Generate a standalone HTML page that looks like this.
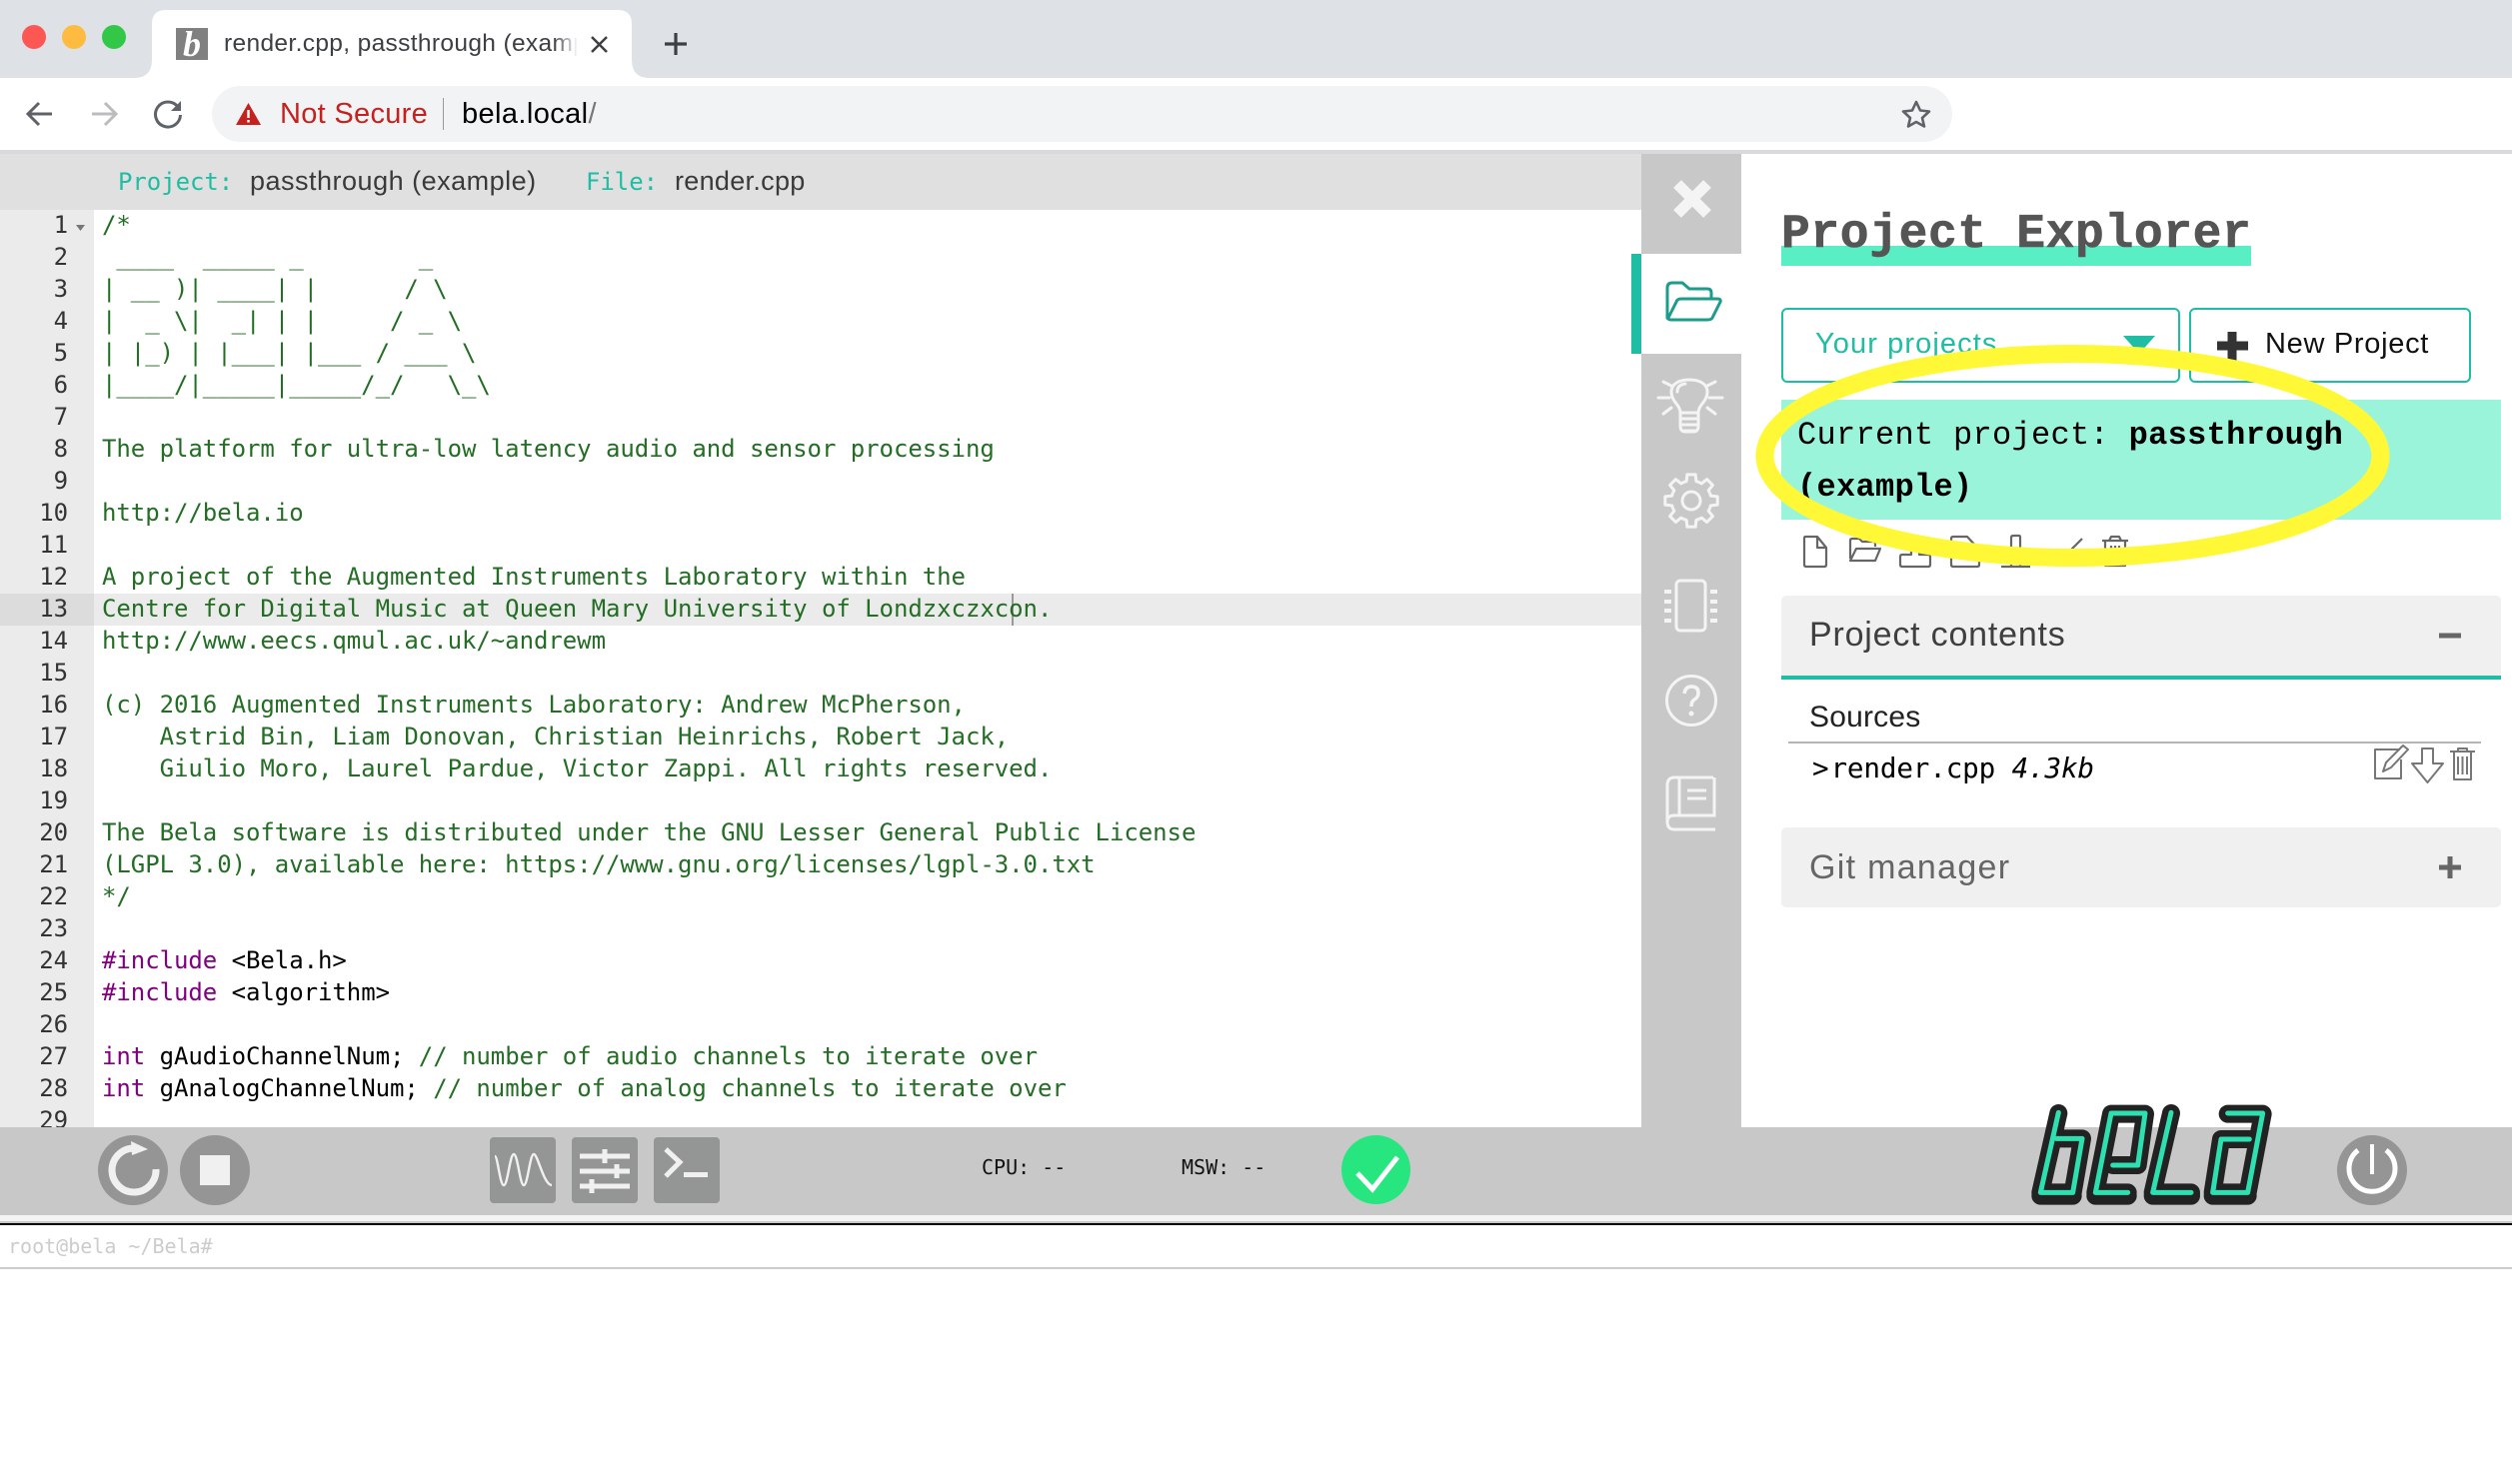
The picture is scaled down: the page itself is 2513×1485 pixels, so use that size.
<!DOCTYPE html>
<html><head><meta charset="utf-8"><title>render.cpp, passthrough (example)</title>
<style>
html,body{margin:0;padding:0;width:2513px;height:1485px;overflow:hidden;background:#fff}
.a{position:absolute;white-space:nowrap}
.s{font-family:"Liberation Sans",sans-serif}
.m{font-family:"Liberation Mono",monospace}
.d{font-family:"DejaVu Sans Mono",monospace}
pre{margin:0;position:absolute;font-family:"DejaVu Sans Mono",monospace;font-size:24px;line-height:32px;letter-spacing:-.05px}
.c{color:#236e24}.k{color:#800080}
</style></head><body>
<div class="a" style="left:0;top:0;width:2513px;height:78px;background:#dee1e6"></div>
<div class="a" style="left:0;top:78px;width:2513px;height:72px;background:#fff"></div>
<svg class="a" style="left:0;top:0" width="700" height="80" viewBox="0 0 700 80"><path d="M134 78Q152 78 152 60V24Q152 10 166 10H618Q632 10 632 24V60Q632 78 650 78Z" fill="#fff"/></svg>
<div class="a" style="left:0;top:150px;width:2513px;height:4px;background:#d8d9dc"></div>
<div class="a" style="left:212px;top:86px;width:1741px;height:56px;border-radius:28px;background:#f1f3f4"></div>
<div class="a s" style="left:224px;top:28px;width:354px;height:34px;overflow:hidden;font-size:24.5px;line-height:32px;color:#3c4043;letter-spacing:.35px">render.cpp, passthrough (example)<div class="a" style="right:0;top:0;width:24px;height:34px;background:linear-gradient(90deg,rgba(255,255,255,0),#fff)"></div></div>
<div class="a" style="left:176px;top:28px;width:32px;height:32px;background:#808080"></div>
<div class="a" style="left:176px;top:24px;width:32px;text-align:center;font:italic bold 36px 'Liberation Serif',serif;color:#fff;line-height:40px">b</div>
<div class="a s" style="left:280px;top:96px;font-size:29px;line-height:36px;color:#c5221f;letter-spacing:.3px">Not Secure</div>
<div class="a" style="left:443px;top:98px;width:1px;height:32px;background:#9a9a9a"></div>
<div class="a s" style="left:462px;top:96px;font-size:29px;line-height:36px;color:#000;letter-spacing:.4px">bela.local<span style="color:#777">/</span></div>

<div class="a" style="left:0;top:154px;width:1642px;height:56px;background:#e0e0e0"></div>
<div class="a d" style="left:118px;top:166px;font-size:24px;line-height:32px;color:#1fbda3;letter-spacing:-.05px">Project:</div>
<div class="a s" style="left:250px;top:165px;font-size:27px;line-height:32px;color:#3a3a3a;letter-spacing:.5px">passthrough (example)</div>
<div class="a d" style="left:586px;top:166px;font-size:24px;line-height:32px;color:#1fbda3;letter-spacing:-.05px">File:</div>
<div class="a s" style="left:675px;top:165px;font-size:27px;line-height:32px;color:#3a3a3a;letter-spacing:.3px">render.cpp</div>

<div class="a" style="left:0;top:210px;width:94px;height:918px;background:#ebebeb"></div>
<div class="a" style="left:0;top:594px;width:94px;height:32px;background:#dcdcdc"></div>
<div class="a" style="left:94px;top:594px;width:1548px;height:32px;background:#ebebeb"></div>
<div class="a" style="left:1012px;top:594px;width:2px;height:32px;background:#999"></div>
<div class="a" style="left:0;top:210px;width:1642px;height:918px;overflow:hidden">
<pre style="left:0;top:-1px;width:68px;text-align:right;color:#333">1
2
3
4
5
6
7
8
9
10
11
12
13
14
15
16
17
18
19
20
21
22
23
24
25
26
27
28
29</pre>
<pre style="left:102px;top:-1px;color:#000"><span class="c">/*
 ____  _____ _        _
| __ )| ____| |      / \
|  _ \|  _| | |     / _ \
| |_) | |___| |___ / ___ \
|____/|_____|_____/_/   \_\

The platform for ultra-low latency audio and sensor processing

http://bela.io

A project of the Augmented Instruments Laboratory within the
Centre for Digital Music at Queen Mary University of Londzxczxcon.
http://www.eecs.qmul.ac.uk/~andrewm

(c) 2016 Augmented Instruments Laboratory: Andrew McPherson,
    Astrid Bin, Liam Donovan, Christian Heinrichs, Robert Jack,
    Giulio Moro, Laurel Pardue, Victor Zappi. All rights reserved.

The Bela software is distributed under the GNU Lesser General Public License
(LGPL 3.0), available here: https://www.gnu.org/licenses/lgpl-3.0.txt
*/</span>

<span class="k">#include</span> &lt;Bela.h&gt;
<span class="k">#include</span> &lt;algorithm&gt;

<span class="k">int</span> gAudioChannelNum; <span class="c">// number of audio channels to iterate over</span>
<span class="k">int</span> gAnalogChannelNum; <span class="c">// number of analog channels to iterate over</span></pre>
</div>

<div class="a" style="left:1642px;top:154px;width:100px;height:974px;background:#c8c8c8"></div>
<div class="a" style="left:1642px;top:254px;width:100px;height:100px;background:#fff"></div>
<div class="a" style="left:1632px;top:254px;width:10px;height:100px;background:#1fbda3"></div>

<div class="a" style="left:1782px;top:246px;width:470px;height:20px;background:#5aeec4"></div>
<div class="a m" style="left:1782px;top:205px;font-size:48px;line-height:60px;font-weight:bold;color:#555;letter-spacing:.6px;-webkit-text-stroke:.6px #555">Project Explorer</div>

<div class="a" style="left:1782px;top:308px;width:395px;height:71px;border:2px solid #1fbda3;border-radius:6px"></div>
<div class="a s" style="left:1816px;top:326px;font-size:29px;line-height:36px;color:#1fbda3;letter-spacing:1.1px">Your projects</div>
<div class="a" style="left:2190px;top:308px;width:278px;height:71px;border:2px solid #1fbda3;border-radius:6px"></div>
<div class="a s" style="left:2266px;top:326px;font-size:29px;line-height:36px;color:#111;letter-spacing:.7px">New Project</div>

<div class="a" style="left:1782px;top:400px;width:720px;height:120px;background:#9af4da"></div>
<div class="a m" style="left:1798px;top:410px;font-size:32px;line-height:52px;color:#000;letter-spacing:.3px">Current project: <b>passthrough</b><br><b>(example)</b></div>

<div class="a" style="left:1782px;top:596px;width:720px;height:80px;background:#f0f0f0;border-radius:5px 5px 0 0;border-bottom:4px solid #1fbda3"></div>
<div class="a s" style="left:1810px;top:615px;font-size:34px;line-height:40px;color:#3f3f3f;letter-spacing:.8px">Project contents</div>
<div class="a s" style="left:1810px;top:700px;font-size:30px;line-height:36px;color:#222;letter-spacing:.2px">Sources</div>
<div class="a" style="left:1789px;top:742px;width:693px;height:2px;background:#b5b5b5"></div>
<div class="a d" style="left:1813px;top:752px;font-size:27.6px;line-height:34px;color:#000;letter-spacing:-.15px"><span style="margin-right:2px">&gt;</span>render.cpp <i>4.3kb</i></div>

<div class="a" style="left:1782px;top:828px;width:720px;height:80px;background:#f0f0f0;border-radius:5px"></div>
<div class="a s" style="left:1810px;top:848px;font-size:34px;line-height:40px;color:#666;letter-spacing:1.3px">Git manager</div>

<div class="a" style="left:0;top:1128px;width:2513px;height:88px;background:#c8c8c8"></div>
<div class="a" style="left:0;top:1216px;width:2513px;height:6px;background:#f4f4f4"></div>
<div class="a" style="left:0;top:1222px;width:2513px;height:2px;background:#c8c8c8"></div>
<div class="a" style="left:0;top:1224px;width:2513px;height:2px;background:#000"></div>
<div class="a" style="left:0;top:1268px;width:2513px;height:2px;background:#ccc"></div>
<div class="a d" style="left:8px;top:1235px;font-size:20px;line-height:24px;color:#ccc">root@bela ~/Bela#</div>
<div class="a d" style="left:982px;top:1156px;font-size:20px;line-height:24px;color:#111">CPU: --</div>
<div class="a d" style="left:1182px;top:1156px;font-size:20px;line-height:24px;color:#111">MSW: --</div>

<div class="a" style="left:98px;top:1136px;width:70px;height:70px;border-radius:50%;background:#949594"></div>
<div class="a" style="left:180px;top:1136px;width:70px;height:70px;border-radius:50%;background:#949594"></div>
<div class="a" style="left:200px;top:1156px;width:30px;height:30px;background:#f0f0f0"></div>
<div class="a" style="left:490px;top:1138px;width:66px;height:66px;border-radius:4px;background:#949695"></div>
<div class="a" style="left:572px;top:1138px;width:66px;height:66px;border-radius:4px;background:#949695"></div>
<div class="a" style="left:654px;top:1138px;width:66px;height:66px;border-radius:4px;background:#949695"></div>
<div class="a" style="left:1342px;top:1136px;width:69px;height:69px;border-radius:50%;background:#27e57f"></div>
<div class="a" style="left:2338px;top:1136px;width:70px;height:70px;border-radius:50%;background:#949594"></div>

<svg class="a" style="left:0;top:0" width="2513" height="1485" viewBox="0 0 2513 1485" fill="none">
<defs>
<path id="gs" d="M-7.65 -18.48L-4.84 -19.41L-4.15 -26.17H4.15L4.84 -19.41L7.65 -18.48"/>
</defs>
<circle cx="34" cy="37" r="12" fill="#fc5753"/><circle cx="74" cy="37" r="12" fill="#fdbc40"/><circle cx="114" cy="37" r="12" fill="#33c748"/>
<path d="M592 37L607 52M607 37L592 52" stroke="#3c4043" stroke-width="2.5"/>
<path d="M676 33V55M665 44H687" stroke="#3c4043" stroke-width="3.2"/>
<path d="M52 114H29M39 103L28 114L39 125" stroke="#5f6368" stroke-width="3"/>
<path d="M92 114H115M105 103L116 114L105 125" stroke="#babcbf" stroke-width="3"/>
<path d="M178 107A12.5 12.5 0 1 0 180.5 115" stroke="#5f6368" stroke-width="3"/><path d="M181 101V111H171Z" fill="#5f6368"/>
<path d="M248.500 103L261 125H236Z" fill="#c5221f"/><path d="M248.500 110V118M248.500 120V122.500" stroke="#fff" stroke-width="2.400"/>
<path d="M1917 102L1921 110.500L1930 111.500L1923 118L1925 126.500L1917 122L1909 126.500L1911 118L1904 111.500L1913 110.500Z" stroke="#5f6368" stroke-width="2.600" stroke-linejoin="round"/>
<!-- fold -->
<path d="M76 225H85L80.500 231Z" fill="#777"/>
<!-- sidebar -->
<path d="M1678 184L1708 214M1708 184L1678 214" stroke="#f4f4f4" stroke-width="11"/>
<path d="M1668 319V288Q1668 283 1673 283H1683L1690 289H1708Q1712 289 1712 293V299" stroke="#1d9c8c" stroke-width="3"/>
<path d="M1668 320L1677 302Q1678 299 1682 299H1718Q1722 299 1721 302L1713 318Q1712 320 1708 320H1672Q1668 320 1668 316" stroke="#1d9c8c" stroke-width="3"/>
<g stroke="#f4f4f4" stroke-width="3" stroke-linecap="round">
<path d="M1681 413C1681 405 1672 402 1672 392C1672 384 1680 380 1690 380C1700 380 1708 384 1708 392C1708 402 1699 405 1699 413ZM1681 419H1699M1682 425H1698M1685 431H1695M1681 413V426Q1681 432 1686 432H1694Q1699 432 1699 426V413M1678 392Q1678 385 1686 384"/>
<path d="M1659 398H1670M1710 398H1723M1664 382L1672 386M1716 382L1708 386M1664 414L1672 408M1716 414L1708 408"/>
</g>
<g stroke="#f4f4f4" stroke-width="3" stroke-linejoin="round" transform="translate(1692 501)">
<use href="#gs"/><use href="#gs" transform="rotate(45)"/><use href="#gs" transform="rotate(90)"/><use href="#gs" transform="rotate(135)"/><use href="#gs" transform="rotate(180)"/><use href="#gs" transform="rotate(225)"/><use href="#gs" transform="rotate(270)"/><use href="#gs" transform="rotate(315)"/>
<circle r="9"/>
</g>
<rect x="1677" y="581" width="29" height="50" rx="4" stroke="#f4f4f4" stroke-width="3"/>
<g fill="#f4f4f4"><rect x="1665" y="590" width="7" height="4"/><rect x="1665" y="600" width="7" height="4"/><rect x="1665" y="609" width="7" height="4"/><rect x="1665" y="619" width="7" height="4"/><rect x="1711" y="590" width="7" height="4"/><rect x="1711" y="600" width="7" height="4"/><rect x="1711" y="609" width="7" height="4"/><rect x="1711" y="619" width="7" height="4"/></g>
<circle cx="1692" cy="701" r="24.500" stroke="#f4f4f4" stroke-width="3"/>
<path d="M1685 694Q1686 687 1692 687Q1699 687 1699 693Q1699 698 1695 700Q1692 702 1692 707" stroke="#f4f4f4" stroke-width="3.500" fill="none"/><circle cx="1692" cy="714" r="2.500" fill="#f4f4f4"/>
<path d="M1714 778H1675Q1668 778 1668 786V822Q1668 830 1675 830H1716M1668 822Q1668 816 1675 816H1715V778M1680 778V816M1688 791H1707M1688 799H1707" stroke="#f4f4f4" stroke-width="3"/>
<!-- dropdown -->
<path d="M2124 336H2156L2140 354Z" fill="#1fbda3"/>
<path d="M2233 332V362M2218 346H2249" stroke="#333" stroke-width="9"/>
<!-- small icon row -->
<g stroke="#666" stroke-width="2.200" stroke-linejoin="round">
<path d="M1815 537H1806Q1805 537 1805 539V565Q1805 567 1807 567H1825Q1827 567 1827 565V548L1818 537ZM1818 537V548H1827"/>
<path d="M1851 559V541Q1851 539 1853 539H1860L1863 542H1874Q1876 542 1876 544V547M1851 561L1857 549H1881L1876 561Z"/>
<path d="M1901 557V565Q1901 567 1903 567H1929Q1931 567 1931 565V557Q1931 555 1929 555H1920V540H1912V555H1903Q1901 555 1901 557Z"/>
<path d="M1952 539V565Q1952 567 1954 567H1978Q1980 567 1980 565V550L1968 537H1954Q1952 537 1952 539Z"/>
<path d="M2002 567H2031M2012 567V538Q2012 536 2014 536H2020Q2021 536 2021 538V567"/>
<path d="M2063 550L2067 555L2083 539"/>
<path d="M2103 541H2129M2106 541V566H2126V541M2110 541L2112 537H2120L2122 541M2112 546V550M2116 546V550M2120 546V550"/>
</g>
<!-- panel +/- -->
<path d="M2440 636H2462" stroke="#666" stroke-width="5"/>
<path d="M2440 868H2462M2451 857V879" stroke="#666" stroke-width="5"/>
<!-- file icons -->
<g stroke="#777" stroke-width="2" stroke-linejoin="round">
<path d="M2401 750H2376V779H2402V760"/><path d="M2384 772L2387 763L2404 746L2409 750L2392 768Z"/>
<path d="M2423 749H2434V764H2444L2428.500 783L2413 764H2423Z"/>
<path d="M2451 752H2476M2455 752V780H2472V752M2459 752V749H2468V752M2459 757V775M2463.500 757V775M2468 757V775"/>
</g>
<!-- toolbar icons -->
<path d="M134 1149A22 22 0 1 0 156 1170" stroke="#f0f0f0" stroke-width="7"/><path d="M131 1142L148 1150L132 1156Z" fill="#f0f0f0"/>
<path d="M495 1157C498 1157 500 1186 504 1186C508 1186 510 1155 514 1155C518 1155 520 1186 524 1186C528 1186 530 1155 534 1155C538 1155 544 1186 552 1186" stroke="#f0f0f0" stroke-width="2.400"/>
<g stroke="#f0f0f0" stroke-width="5"><path d="M580 1157H630M580 1172H630M580 1187H630"/><path d="M605 1150V1164M617 1165V1179M592 1180V1194"/></g>
<path d="M666 1150L680 1163L666 1177" stroke="#f0f0f0" stroke-width="5"/><rect x="684" y="1173" width="24" height="5" fill="#f0f0f0"/>
<path d="M1358 1174L1373 1190L1398 1158" stroke="#fff" stroke-width="5"/>
<path d="M2359 1151A23 23 0 1 0 2387 1151" stroke="#fff" stroke-width="5"/><path d="M2373 1145V1175" stroke="#fff" stroke-width="4"/>
<!-- logo -->
<g transform="translate(2002 1090) scale(.3333)" stroke-linecap="round" stroke-linejoin="round">
<g stroke="#222" stroke-width="54" fill="none">
<path d="M172 72L118 310H215L243 148H165M330 74H432L410 228H335M330 74L283 310H380M510 72L455 310H570M680 74H785L740 310H635L660 150H745"/>
<path transform="translate(0 10)" d="M118 310H215M283 310H380M455 310H570M635 310H740"/>
</g>
<path d="M172 70L118 310H215L243 148H165M330 72H432L410 228H335M330 72L283 310H380M510 70L455 310H570M680 72H785L740 310H635L660 150H745" stroke="#2ee0b0" stroke-width="15" fill="none"/>
</g>
<!-- yellow ellipse -->
<ellipse cx="2073.500" cy="456" rx="308" ry="102" stroke="#fff836" stroke-width="18"/>
</svg>
</body></html>
